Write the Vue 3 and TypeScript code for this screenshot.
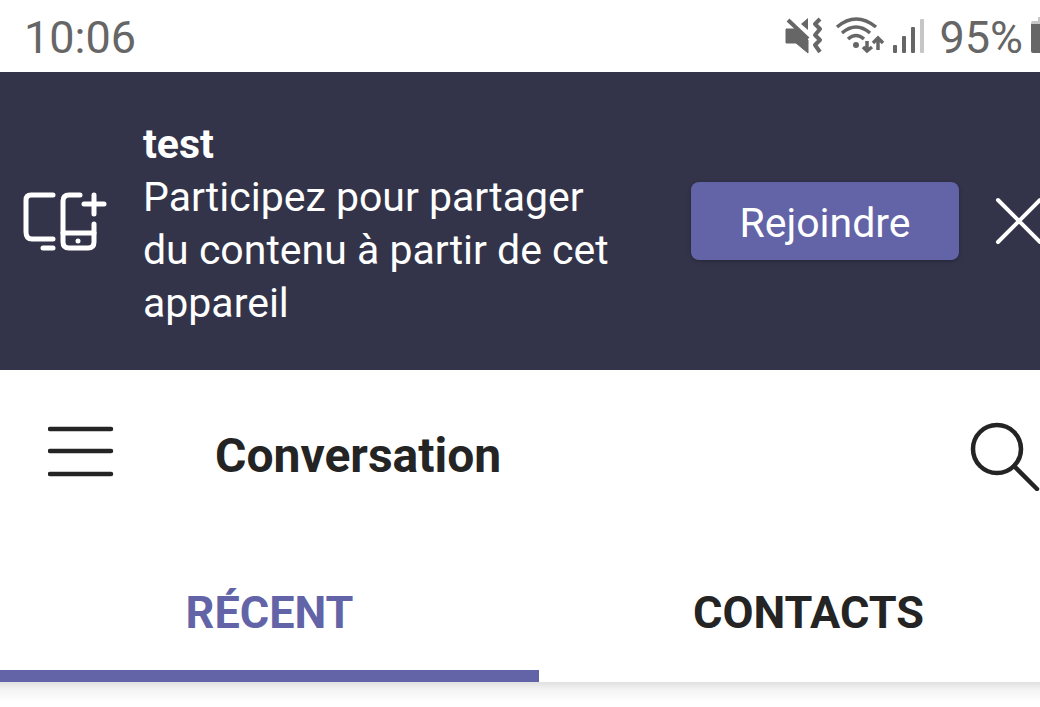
<script setup lang="ts">
import { ref } from 'vue'

type TabId = 'recent' | 'contacts'

const tabs: { id: TabId; label: string }[] = [
  { id: 'recent', label: 'RÉCENT' },
  { id: 'contacts', label: 'CONTACTS' },
]
const active = ref<TabId>('recent')
const bannerOpen = ref(true)
</script>

<template>
  <div class="viewport">
    <div class="screen">
      <div class="status">
        <time class="clock">10:06</time>
        <div class="indicators">
          <svg class="mute" width="38" height="38" viewBox="0 0 38 38" aria-hidden="true">
            <path d="M1 12H11L23 23V36L11 26H1Z" fill="#666" stroke="#666" stroke-linejoin="round" />
            <path d="M3 3L23 22" stroke="#666" stroke-width="4" fill="none" />
            <path d="M16 7L23 1V13Z" fill="#666" />
            <path d="M35 2L30 7L35 12L30 18L35 23L30 28L35 35" fill="none" stroke="#666" stroke-width="4" stroke-linejoin="round" />
          </svg>
          <svg class="wifi" width="50" height="38" viewBox="0 0 50 38" aria-hidden="true">
            <g fill="none" stroke="#666" stroke-width="3.5">
              <path d="M2 10Q21 -6 41 10" />
              <path d="M7 16Q21 4 35 16" />
              <path d="M13 22Q21 15 29 22" />
            </g>
            <circle cx="21" cy="28" r="3" fill="#666" />
            <g fill="none" stroke="#666" stroke-width="3.5">
              <path d="M32 24V34M28 30L32 34L37 30" />
              <path d="M43 33V22M38 26L43 21L48 26" />
            </g>
          </svg>
          <svg class="signal" width="32" height="38" viewBox="0 0 32 38" aria-hidden="true">
            <g fill="#666">
              <rect x="0" y="28" width="4" height="8" rx="1" />
              <rect x="9" y="19" width="4" height="17" rx="1" />
              <rect x="18" y="10" width="4" height="26" rx="1" />
            </g>
            <rect x="27" y="2" width="4" height="34" rx="1" fill="#c6c6c6" />
          </svg>
          <span class="percent">95%</span>
          <svg class="battery" width="20" height="38" viewBox="0 0 20 38" aria-hidden="true">
            <path d="M0 6Q0 4 2 4H7V0H13V4H18Q20 4 20 6V12H0Z" fill="#c6c6c6" />
            <path d="M0 7H20V34Q20 36 18 36H2Q0 36 0 34Z" fill="#666" />
          </svg>
        </div>
      </div>

      <section v-if="bannerOpen" class="banner">
        <svg class="devices" width="88" height="64" viewBox="0 0 88 64" aria-hidden="true">
          <g fill="none" stroke="#fff" stroke-width="5" stroke-linecap="round" stroke-linejoin="round">
            <path d="M31 6H9Q4 6 4 11V43Q4 50 10 50H31" />
            <path d="M21 59H31" />
            <path d="M58 6H47Q41 6 41 12V53Q41 59 47 59H66Q72 59 72 53V35" />
            <path d="M41 44H72" />
            <path d="M72 6V25M62 15H82" />
          </g>
          <circle cx="56" cy="52" r="2.5" fill="#fff" />
        </svg>
        <div class="message">
          <strong>test</strong>
          <p>Participez pour partager du contenu à partir de cet appareil</p>
        </div>
        <button class="join" type="button">Rejoindre</button>
        <button class="icon-button close" type="button" aria-label="Fermer" @click="bannerOpen = false">
          <svg width="48" height="48" viewBox="0 0 48 48" aria-hidden="true">
            <path d="M3 3L45 45M45 3L3 45" stroke="#fff" stroke-width="4" stroke-linecap="round" />
          </svg>
        </button>
      </section>

      <header class="header">
        <button class="icon-button" type="button" aria-label="Menu">
          <svg width="66" height="62" viewBox="0 0 66 62" aria-hidden="true">
            <path d="M2 4H63M2 26H63M2 49H63" stroke="#242424" stroke-width="4.5" stroke-linecap="round" />
          </svg>
        </button>
        <h1>Conversation</h1>
        <button class="icon-button" type="button" aria-label="Rechercher">
          <svg width="70" height="70" viewBox="0 0 70 70" aria-hidden="true">
            <circle cx="27" cy="28" r="24" fill="none" stroke="#242424" stroke-width="4.5" />
            <path d="M44 45L67 68" stroke="#242424" stroke-width="4.5" stroke-linecap="round" />
          </svg>
        </button>
      </header>

      <div class="tabs" role="tablist">
        <button
          v-for="tab in tabs"
          :key="tab.id"
          type="button"
          role="tab"
          class="tab"
          :class="{ active: active === tab.id }"
          :aria-selected="active === tab.id"
          @click="active = tab.id"
        >
          {{ tab.label }}
        </button>
      </div>
      <div class="shade"></div>
    </div>
  </div>
</template>

<style>
body {
  margin: 0;
  background: #fff;
}
</style>

<style scoped>
.viewport {
  min-height: 100vh;
  overflow: hidden;
  font-family: Roboto, 'Liberation Sans', sans-serif;
  color: #242424;
}

/* The handset screen runs a little past the window's right edge. */
.screen {
  width: calc(100% + 38px);
}

button {
  margin: 0;
  border: 0;
  font-family: inherit;
  cursor: pointer;
}

svg {
  display: block;
  flex: none;
}

.status {
  display: flex;
  align-items: center;
  justify-content: space-between;
  height: 72px;
  padding: 0 27px 0 24px;
  box-sizing: border-box;
  color: #666;
  font-size: 45px;
  line-height: 72px;
}

.clock,
.percent {
  padding-top: 4px;
}

.indicators {
  display: flex;
  align-items: center;
}

.wifi {
  margin-left: 12px;
}

.signal {
  margin-left: 8px;
}

.percent {
  margin-left: 14px;
}

.battery {
  margin-left: 8px;
}

.banner {
  display: flex;
  align-items: center;
  box-sizing: border-box;
  padding: 40px 35px 40px 22px;
  background: #33344a;
  color: #fff;
  font-size: 41px;
  line-height: 53px;
}

.message {
  flex: 1;
  margin-left: 33px;
  padding: 6px 68px 0 0;
}

.message strong {
  display: block;
}

.message p {
  margin: 0;
}

.join {
  width: 268px;
  height: 78px;
  padding: 4px 0 0;
  border-radius: 8px;
  background: #6264a7;
  box-shadow: 0 1px 4px rgba(0, 0, 0, 0.3);
  color: #fff;
  font-size: 41px;
}

.icon-button {
  padding: 0;
  background: transparent;
}

.close {
  margin-left: 36px;
}

.header {
  display: flex;
  align-items: center;
  height: 172px;
  padding: 0 38px 0 48px;
}

.header h1 {
  flex: 1;
  margin: 0 0 0 101px;
  font-size: 48px;
  font-weight: 700;
  line-height: 56px;
}

.tabs {
  display: flex;
}

.tab {
  flex: 1;
  height: 140px;
  padding: 12px 0 0;
  border-bottom: 12px solid transparent;
  background: #fff;
  color: #242424;
  font-size: 45px;
  font-weight: 700;
}

.tab.active {
  border-bottom-color: #6264a7;
  color: #6264a7;
}

.shade {
  height: 20px;
  background: linear-gradient(#e0e0e0, #f4f4f4 40%, #fff);
}
</style>
